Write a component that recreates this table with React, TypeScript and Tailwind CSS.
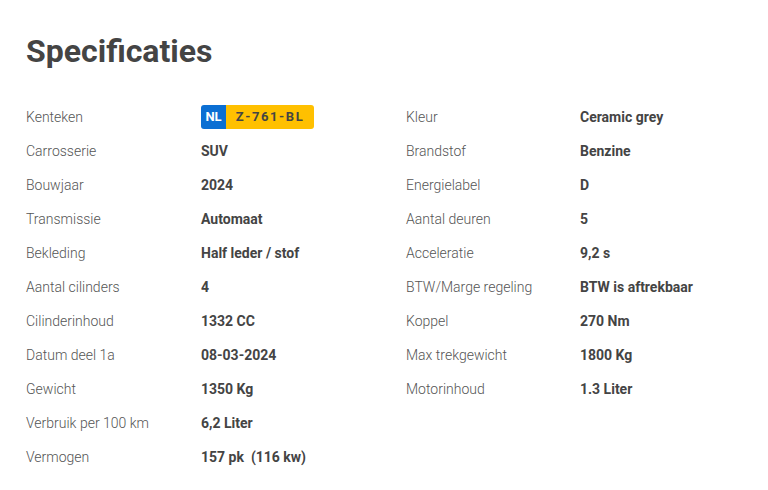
const left: [string, string][] = [
  ["Kenteken", ""],
  ["Carrosserie", "SUV"],
  ["Bouwjaar", "2024"],
  ["Transmissie", "Automaat"],
  ["Bekleding", "Half leder / stof"],
  ["Aantal cilinders", "4"],
  ["Cilinderinhoud", "1332 CC"],
  ["Datum deel 1a", "08-03-2024"],
  ["Gewicht", "1350 Kg"],
  ["Verbruik per 100 km", "6,2 Liter"],
  ["Vermogen", "157 pk\u00a0 (116 kw)"],
];

const right: [string, string][] = [
  ["Kleur", "Ceramic grey"],
  ["Brandstof", "Benzine"],
  ["Energielabel", "D"],
  ["Aantal deuren", "5"],
  ["Acceleratie", "9,2 s"],
  ["BTW/Marge regeling", "BTW is aftrekbaar"],
  ["Koppel", "270 Nm"],
  ["Max trekgewicht", "1800 Kg"],
  ["Motorinhoud", "1.3 Liter"],
];

function Plate() {
  return (
    <div className="flex h-[24px] w-[113px] overflow-hidden rounded-[3px]">
      <div className="flex w-[25px] items-center justify-center bg-[#0b6fd3] text-[13px] font-bold text-white">
        NL
      </div>
      <div className="flex flex-1 items-center justify-center bg-[#ffc000] text-[13px] font-bold tracking-[1.6px] text-[#444]">
        Z-761-BL
      </div>
    </div>
  );
}

function Column({ rows, labelW }: { rows: [string, string][]; labelW: string }) {
  return (
    <div className="flex flex-col">
      {rows.map(([label, value]) => (
        <div key={label} className="flex h-[34px] items-center text-[14px]">
          <div className={`${labelW} font-light text-[#555]`}>{label}</div>
          <div className="font-bold text-[#444]">{label === "Kenteken" ? <Plate /> : value}</div>
        </div>
      ))}
    </div>
  );
}

export default function App() {
  return (
    <main className="min-h-screen bg-white px-[26px] pt-[32px]" style={{ fontFamily: "Roboto, 'Liberation Sans', sans-serif" }}>
      <h1 className="text-[32px] font-bold leading-[38px] text-[#444]">Specificaties</h1>
      <div className="mt-[30px] flex">
        <div className="w-[380px]">
          <Column rows={left} labelW="w-[175px]" />
        </div>
        <Column rows={right} labelW="w-[174px]" />
      </div>
    </main>
  );
}
